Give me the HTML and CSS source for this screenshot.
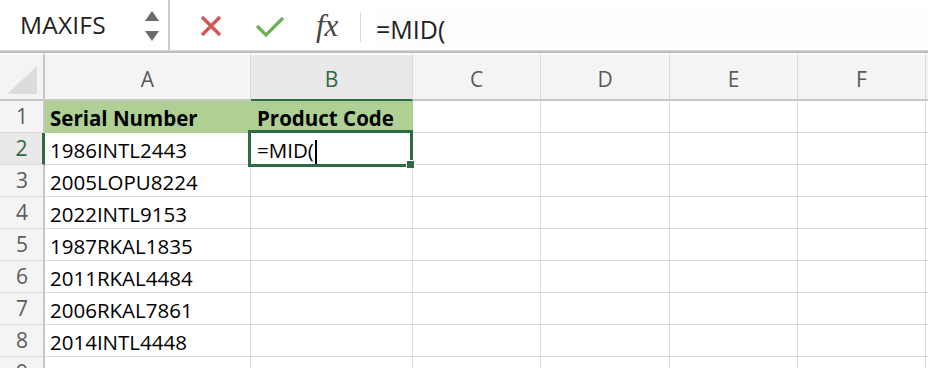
FILE: index.html
```html
<!DOCTYPE html>
<html>
<head>
<meta charset="utf-8">
<link rel="stylesheet" href="styles.css">
</head>
<body>
<div class="app">
  <div class="fbar">
    <div class="namebox">
      <span class="nb-text">MAXIFS</span>
      <svg class="spin" width="16" height="34" viewBox="0 0 16 34">
        <path d="M1 12 L8 2 L15 12 Z" fill="#6b6b6b"/>
        <path d="M1 22 L15 22 L8 32 Z" fill="#6b6b6b"/>
      </svg>
    </div>
    <svg class="ico-x" width="22" height="22" viewBox="0 0 22 22">
      <path d="M2 2 L20 20 M20 2 L2 20" stroke="#d6534f" stroke-width="3.2" fill="none"/>
    </svg>
    <svg class="ico-check" width="30" height="22" viewBox="0 0 30 22">
      <path d="M2 10 L11 19 L28 2" stroke="#6ab255" stroke-width="3.2" fill="none"/>
    </svg>
    <span class="fx">fx</span>
    <div class="fsep"></div>
    <div class="finput">=MID(</div>
  </div>
  <div class="divider"></div>
  <div class="sheet">
    <div class="ch corner">
      <svg width="32" height="30" viewBox="0 0 32 30"><path d="M30 0 L30 28 L0 28 Z" fill="#dcdcdc"/></svg>
    </div>
    <div class="ch">A</div>
    <div class="ch ch-active">B</div>
    <div class="ch">C</div>
    <div class="ch">D</div>
    <div class="ch">E</div>
    <div class="ch">F</div>
    <div class="ch ch-last"></div>

    <div class="rh">1</div>
    <div class="c c-hdr bold">Serial Number</div>
    <div class="c c-hdr bold c-b">Product Code</div>
    <div class="c"></div><div class="c"></div><div class="c"></div><div class="c"></div><div class="c c-last"></div>

    <div class="rh rh-active">2</div>
    <div class="c">1986INTL2443</div>
    <div class="c c-b c-sel">=MID(<span class="caret"></span>
      <div class="sel-frame"><div class="handle"></div></div>
    </div>
    <div class="c"></div><div class="c"></div><div class="c"></div><div class="c"></div><div class="c c-last"></div>

    <div class="rh">3</div>
    <div class="c">2005LOPU8224</div>
    <div class="c"></div><div class="c"></div><div class="c"></div><div class="c"></div><div class="c"></div><div class="c c-last"></div>

    <div class="rh">4</div>
    <div class="c">2022INTL9153</div>
    <div class="c"></div><div class="c"></div><div class="c"></div><div class="c"></div><div class="c"></div><div class="c c-last"></div>

    <div class="rh">5</div>
    <div class="c">1987RKAL1835</div>
    <div class="c"></div><div class="c"></div><div class="c"></div><div class="c"></div><div class="c"></div><div class="c c-last"></div>

    <div class="rh">6</div>
    <div class="c">2011RKAL4484</div>
    <div class="c"></div><div class="c"></div><div class="c"></div><div class="c"></div><div class="c"></div><div class="c c-last"></div>

    <div class="rh">7</div>
    <div class="c">2006RKAL7861</div>
    <div class="c"></div><div class="c"></div><div class="c"></div><div class="c"></div><div class="c"></div><div class="c c-last"></div>

    <div class="rh">8</div>
    <div class="c">2014INTL4448</div>
    <div class="c"></div><div class="c"></div><div class="c"></div><div class="c"></div><div class="c"></div><div class="c c-last"></div>

    <div class="rh">9</div>
    <div class="c">1992LAGR8080</div>
    <div class="c"></div><div class="c"></div><div class="c"></div><div class="c"></div><div class="c"></div><div class="c c-last"></div>
  </div>
</div>
</body>
</html>
```

FILE: styles.css
```css
* { box-sizing: border-box; }
html, body { margin: 0; padding: 0; background: #ffffff; }
body { font-family: "Open Sans", "Noto Sans", sans-serif; color: #000; }
.app { width: 928px; height: 368px; overflow: hidden; }

.fbar { height: 50px; display: flex; align-items: center; background: #ffffff; }
.namebox {
  width: 170px; height: 50px; flex: none;
  border-right: 2px solid #cbcbcb;
  display: flex; align-items: center; justify-content: space-between;
  padding-left: 20px; padding-right: 8px;
}
.nb-text { font-size: 24.5px; color: #222; letter-spacing: 0.2px; position: relative; top: -1px; }
.spin { flex: none; margin-top: 2px; }
.ico-x { flex: none; margin-left: 30px; margin-top: 2px; }
.ico-check { flex: none; margin-left: 33px; margin-top: 3px; }
.fx { flex: none; margin-left: 31px; font-family: "Liberation Serif", "DejaVu Serif", serif; font-style: italic; font-size: 31px; color: #444; width: 30px; margin-top: 2px; }
.fsep { flex: none; width: 1px; height: 30px; background: #d9d9d9; margin-left: 14px; margin-top: 4px; }
.finput { flex: 1; margin-left: 15px; font-size: 25px; color: #222; height: 38px; line-height: 38px; margin-top: 8px; background: #fdfdfd; }

.divider { height: 3px; border-top: 1px solid #d9d9d9; background: #bdbdbd; }

.sheet {
  display: grid;
  grid-template-columns: 45px 206px 162px 128px 129px 128px 128px 1fr;
  grid-template-rows: 48px repeat(9, 32px);
}
.ch {
  background: #f4f4f4;
  border-right: 1px solid #dadada;
  border-bottom: 2px solid #c6c6c6;
  border-top: 2px solid #fafafa;
  display: flex; align-items: center; justify-content: center;
  font-size: 21px; color: #595959; padding-top: 4px;
}
.ch.corner { border-right: 2px solid #c6c6c6; align-items: flex-end; justify-content: flex-end; padding: 0 4px 3px 0; }
.ch-active { background: #e9e9e9; color: #2d6a42; border-bottom-color: #2e6b45; }
.ch-last { border-right: none; }

.rh {
  background: #f4f4f4;
  border-right: 2px solid #c6c6c6;
  border-bottom: 1px solid #dadada;
  display: flex; align-items: flex-end; justify-content: center;
  font-size: 21px; color: #5c5c5c; line-height: 1; padding-bottom: 5px; padding-left: 1px;
}
.rh-active { background: #e9e9e9; color: #2d6a42; border-right: 3px solid #2e6b45; }

.c {
  border-right: 1px solid #dadada;
  border-bottom: 1px solid #dadada;
  font-size: 20.5px; line-height: 1; white-space: nowrap;
  display: flex; align-items: flex-end;
  padding-left: 5px; padding-bottom: 4px;
}
.c-b { padding-left: 6px; }
.c-last { border-right: none; }
.c-hdr { background: #aed094; border-right-color: #aed094; border-bottom-color: #aed094; }
.bold { font-weight: 700; }

.c-sel { position: relative; }
.caret { display: inline-block; width: 2px; height: 24px; background: #000; margin-left: 1px; margin-bottom: -4px; }
.sel-frame {
  position: absolute; left: -3px; top: -3px; right: -1px; bottom: -3px;
  border: 3px solid #2e6b45;
}
.handle {
  position: absolute; right: -5px; bottom: -5px; width: 9px; height: 9px;
  background: #2e6b45; border: 1px solid #ffffff;
}
```
